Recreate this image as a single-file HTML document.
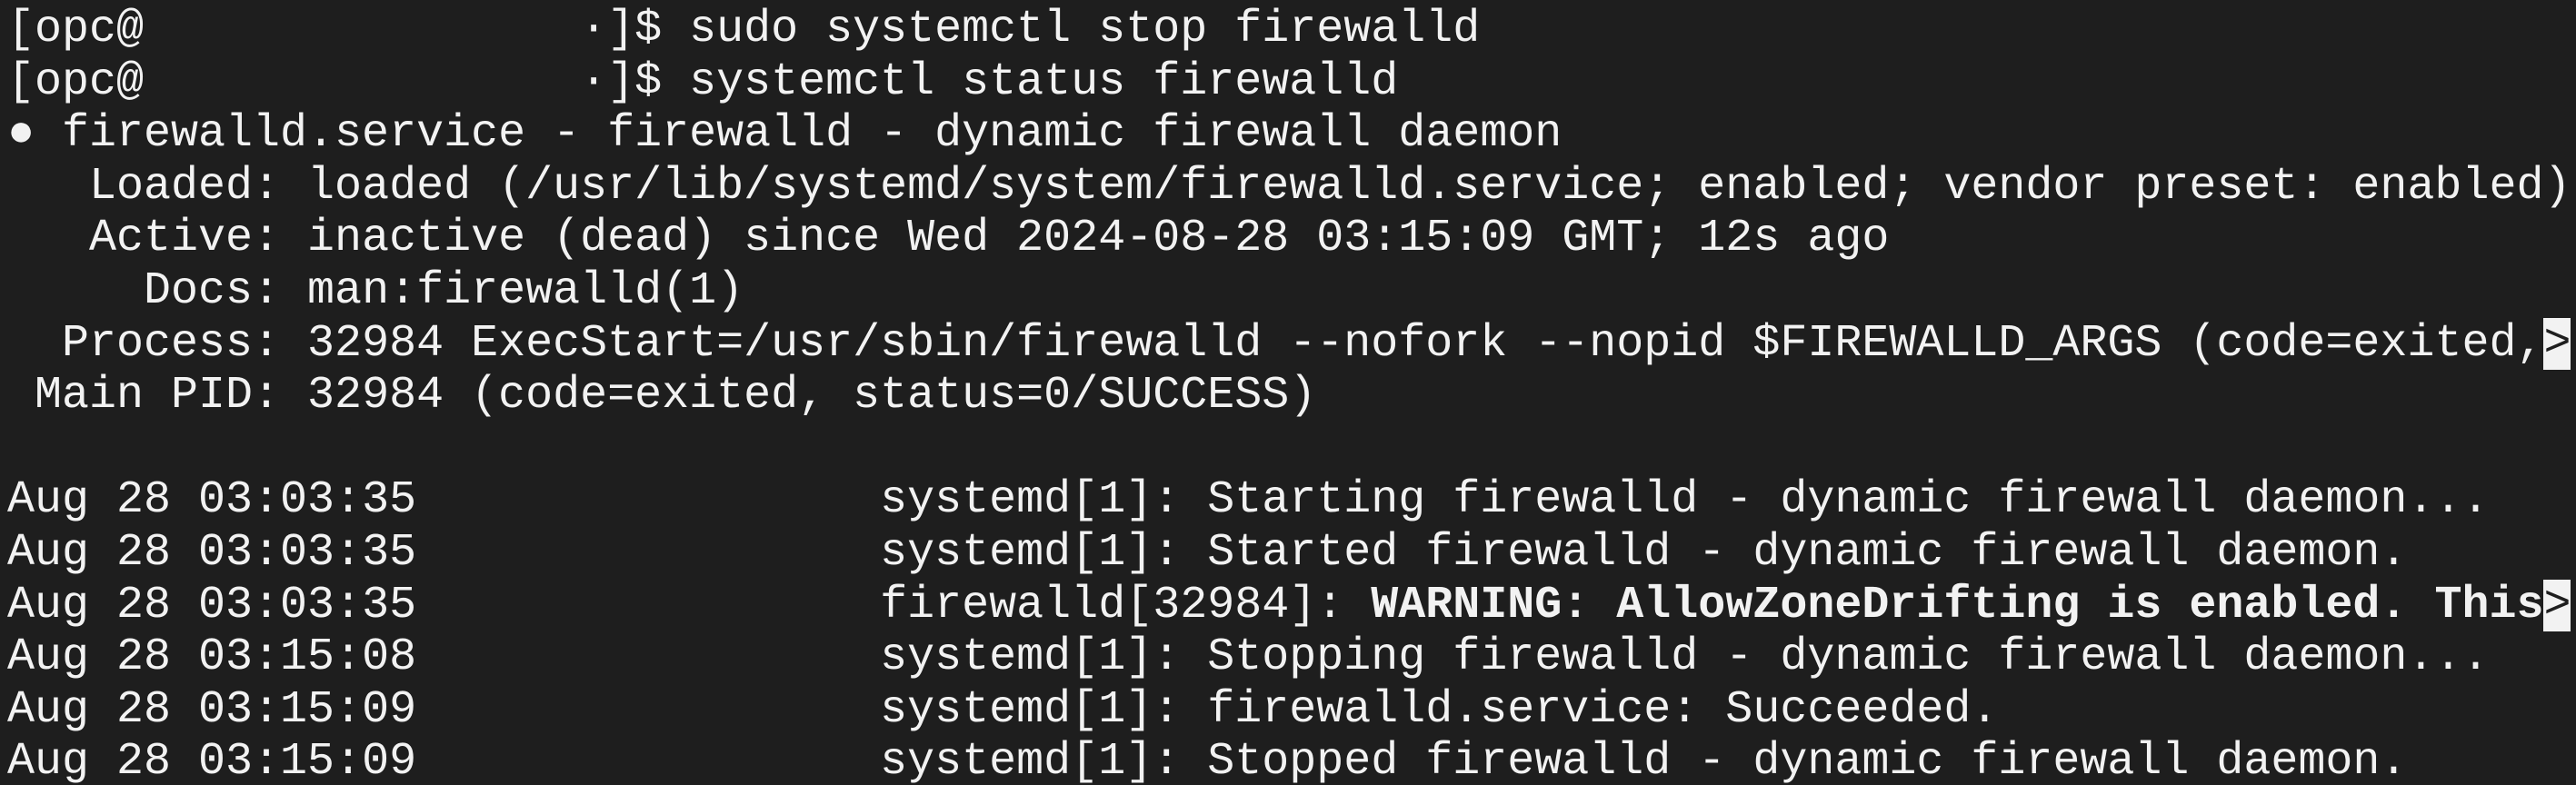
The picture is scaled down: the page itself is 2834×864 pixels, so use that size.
<!DOCTYPE html>
<html><head><meta charset="utf-8"><style>
html,body{margin:0;padding:0;background:#1e1e1e;width:2834px;height:864px;overflow:hidden}
pre{margin:0;padding:4px 0 0 8px;font-family:"Liberation Mono","DejaVu Sans Mono",monospace;font-size:50px;line-height:57.6px;color:#f2f2f2;white-space:pre}
b{font-weight:bold}
.inv{background:#f2f2f2;color:#1e1e1e}
.dot{display:inline-block;width:30px;overflow:visible}
</style></head><body><pre>[opc@                ·]$ sudo systemctl stop firewalld
[opc@                ·]$ systemctl status firewalld
<span class="dot">●</span> firewalld.service - firewalld - dynamic firewall daemon
   Loaded: loaded (/usr/lib/systemd/system/firewalld.service; enabled; vendor preset: enabled)
   Active: inactive (dead) since Wed 2024-08-28 03:15:09 GMT; 12s ago
     Docs: man:firewalld(1)
  Process: 32984 ExecStart=/usr/sbin/firewalld --nofork --nopid $FIREWALLD_ARGS (code=exited,<span class="inv">&gt;</span>
 Main PID: 32984 (code=exited, status=0/SUCCESS)

Aug 28 03:03:35                 systemd[1]: Starting firewalld - dynamic firewall daemon...
Aug 28 03:03:35                 systemd[1]: Started firewalld - dynamic firewall daemon.
Aug 28 03:03:35                 firewalld[32984]: <b>WARNING: AllowZoneDrifting is enabled. This</b><span class="inv">&gt;</span>
Aug 28 03:15:08                 systemd[1]: Stopping firewalld - dynamic firewall daemon...
Aug 28 03:15:09                 systemd[1]: firewalld.service: Succeeded.
Aug 28 03:15:09                 systemd[1]: Stopped firewalld - dynamic firewall daemon.</pre></body></html>
